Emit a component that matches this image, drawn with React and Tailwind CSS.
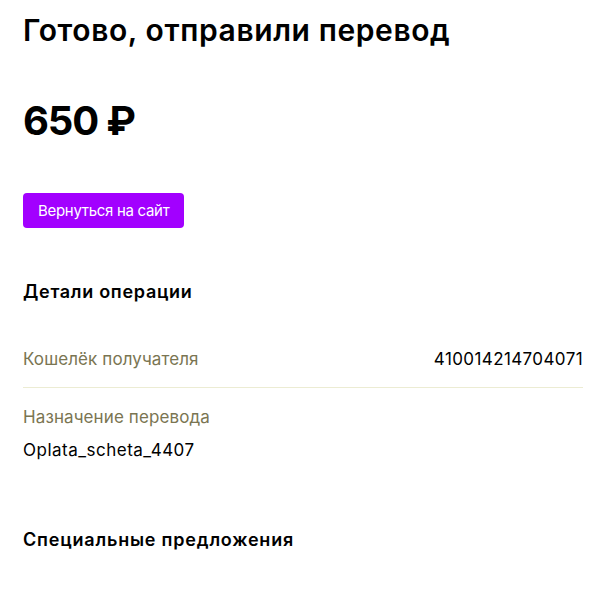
import React from 'react'

const font = { fontFamily: 'Inter, "Noto Sans", sans-serif' }

export default function App() {
  return (
    <div className="min-h-screen bg-white text-black px-[23px] pr-[21px]" style={font}>
      <h1 className="pt-[10px] text-[30px] leading-[40px] font-semibold tracking-[0.6px]">
        Готово, отправили перевод
      </h1>

      <div className="mt-[47px] text-[40px] leading-[48px] font-bold tracking-[-1.2px]">650 ₽</div>

      <button className="mt-[48px] h-[35px] px-[15px] rounded-[4px] bg-[#a200ff] text-white text-[15px] leading-[20px] tracking-[-0.3px]">
        Вернуться на сайт
      </button>

      <h2 className="mt-[52px] text-[18px] leading-[24px] font-semibold tracking-[0.7px]">Детали операции</h2>

      <div className="mt-[43px] flex justify-between items-center pb-[16px] border-b border-[#ececd3]">
        <span className="text-[17px] leading-[24px] text-[#7a7552] tracking-[0.1px]">Кошелёк получателя</span>
        <span className="text-[17px] leading-[24px] tracking-[0.4px]">410014214704071</span>
      </div>

      <div className="pt-[17px]">
        <div className="text-[17px] leading-[24px] text-[#7a7552] tracking-[0.1px]">Назначение перевода</div>
        <div className="mt-[9px] text-[17px] leading-[24px] tracking-[0.5px]">Oplata_scheta_4407</div>
      </div>

      <h2 className="mt-[66px] text-[18px] leading-[24px] font-semibold tracking-[0.8px]">Специальные предложения</h2>
    </div>
  )
}
